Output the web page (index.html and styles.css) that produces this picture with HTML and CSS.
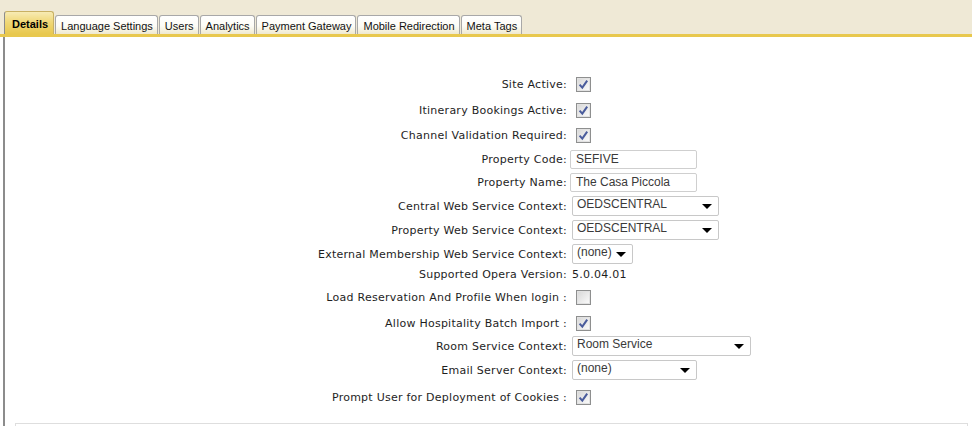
FILE: index.html
```html
<!DOCTYPE html>
<html>
<head>
<meta charset="utf-8">
<title>Details</title>
<link rel="stylesheet" href="styles.css">
</head>
<body>
<div class="tabbar">
  <div class="tab active">Details</div>
  <div class="tab">Language Settings</div>
  <div class="tab">Users</div>
  <div class="tab">Analytics</div>
  <div class="tab">Payment Gateway</div>
  <div class="tab">Mobile Redirection</div>
  <div class="tab">Meta Tags</div>
</div>
<div class="panel">
  <div class="form">
    <div class="lbl">Site Active:</div>
    <div class="ctl"><span class="cb checked"><svg width="15" height="15" viewBox="0 0 15 15"><rect x="0.5" y="0.5" width="14" height="14" fill="#fff" stroke="#8e8f8f"/><rect x="1.5" y="1.5" width="12" height="12" fill="url(#g)" stroke="#e2e2e2"/><path d="M3.6 7.6 L6.3 10.6 L11.2 3.6" fill="none" stroke="#4a5c9c" stroke-width="2"/></svg></span></div>

    <div class="lbl">Itinerary Bookings Active:</div>
    <div class="ctl"><span class="cb checked"><svg width="15" height="15" viewBox="0 0 15 15"><rect x="0.5" y="0.5" width="14" height="14" fill="#fff" stroke="#8e8f8f"/><rect x="1.5" y="1.5" width="12" height="12" fill="url(#g)" stroke="#e2e2e2"/><path d="M3.6 7.6 L6.3 10.6 L11.2 3.6" fill="none" stroke="#4a5c9c" stroke-width="2"/></svg></span></div>

    <div class="lbl">Channel Validation Required:</div>
    <div class="ctl"><span class="cb checked"><svg width="15" height="15" viewBox="0 0 15 15"><rect x="0.5" y="0.5" width="14" height="14" fill="#fff" stroke="#8e8f8f"/><rect x="1.5" y="1.5" width="12" height="12" fill="url(#g)" stroke="#e2e2e2"/><path d="M3.6 7.6 L6.3 10.6 L11.2 3.6" fill="none" stroke="#4a5c9c" stroke-width="2"/></svg></span></div>

    <div class="lbl">Property Code:</div>
    <div class="ctl"><span class="txt">SEFIVE</span></div>

    <div class="lbl">Property Name:</div>
    <div class="ctl"><span class="txt">The Casa Piccola</span></div>

    <div class="lbl">Central Web Service Context:</div>
    <div class="ctl"><span class="sel w146">OEDSCENTRAL<i class="arr"></i></span></div>

    <div class="lbl">Property Web Service Context:</div>
    <div class="ctl"><span class="sel w146">OEDSCENTRAL<i class="arr"></i></span></div>

    <div class="lbl">External Membership Web Service Context:</div>
    <div class="ctl"><span class="sel w60">(none)<i class="arr"></i></span></div>

    <div class="lbl">Supported Opera Version:</div>
    <div class="ctl"><span class="val">5.0.04.01</span></div>

    <div class="lbl">Load Reservation And Profile When login :</div>
    <div class="ctl"><span class="cb"><svg width="15" height="15" viewBox="0 0 15 15"><rect x="0.5" y="0.5" width="14" height="14" fill="#fff" stroke="#8e8f8f"/><rect x="1.5" y="1.5" width="12" height="12" fill="url(#g)" stroke="#e2e2e2"/></svg></span></div>

    <div class="lbl">Allow Hospitality Batch Import :</div>
    <div class="ctl"><span class="cb checked"><svg width="15" height="15" viewBox="0 0 15 15"><rect x="0.5" y="0.5" width="14" height="14" fill="#fff" stroke="#8e8f8f"/><rect x="1.5" y="1.5" width="12" height="12" fill="url(#g)" stroke="#e2e2e2"/><path d="M3.6 7.6 L6.3 10.6 L11.2 3.6" fill="none" stroke="#4a5c9c" stroke-width="2"/></svg></span></div>

    <div class="lbl">Room Service Context:</div>
    <div class="ctl"><span class="sel w178">Room Service<i class="arr"></i></span></div>

    <div class="lbl">Email Server Context:</div>
    <div class="ctl"><span class="sel w124">(none)<i class="arr"></i></span></div>

    <div class="lbl">Prompt User for Deployment of Cookies :</div>
    <div class="ctl"><span class="cb checked"><svg width="15" height="15" viewBox="0 0 15 15"><rect x="0.5" y="0.5" width="14" height="14" fill="#fff" stroke="#8e8f8f"/><rect x="1.5" y="1.5" width="12" height="12" fill="url(#g)" stroke="#e2e2e2"/><path d="M3.6 7.6 L6.3 10.6 L11.2 3.6" fill="none" stroke="#4a5c9c" stroke-width="2"/></svg></span></div>
  </div>
  <div class="footer-box"></div>
</div>
<svg width="0" height="0" class="defs">
  <defs>
    <linearGradient id="g" x1="0" y1="0" x2="1" y2="1">
      <stop offset="0" stop-color="#d8d8d8"/>
      <stop offset="1" stop-color="#fbfbfb"/>
    </linearGradient>
  </defs>
</svg>
</body>
</html>
```

FILE: styles.css
```css
html, body {
  margin: 0;
  padding: 0;
  background: #fff;
  height: 100%;
  overflow: hidden;
}

body {
  font-family: "DejaVu Sans", Verdana, sans-serif;
  font-size: 11px;
  color: #1e1e1e;
}

.tabbar {
  height: 34px;
  background: #efe9d6;
  border-bottom: 3px solid #e8c84e;
  display: flex;
  align-items: flex-end;
  padding-left: 4px;
  box-sizing: content-box;
}

.tab {
  height: 18px;
  line-height: 20px;
  padding: 0 4px 0 5px;
  margin-right: 1px;
  border: 1px solid #a8a8a8;
  border-bottom: none;
  border-radius: 3px 3px 0 0;
  background: linear-gradient(#ffffff 0%, #fdfcf6 55%, #efe9cf 100%);
  font-family: "Liberation Sans", Arial, sans-serif;
  font-size: 11px;
  color: #111;
  white-space: nowrap;
}

.tab.active {
  height: 22px;
  line-height: 25px;
  padding: 0 5px 0 7px;
  border-color: #c9b163;
  border-left-color: #8c8c8c;
  background: linear-gradient(#f7ebb4 0%, #f0d878 45%, #e8c84e 100%);
  font-weight: bold;
  color: #000;
}

.panel {
  margin-left: 3px;
  border-left: 2px solid #8c8c8c;
  height: calc(100% - 37px);
  box-sizing: border-box;
  padding-top: 34px;
}

.form {
  display: grid;
  grid-template-columns: 562px auto;
  grid-template-rows: 26px 26px 24px 24px 23px 24px 24px 24px 16px 30px 22px 24px 24px 30px;
  column-gap: 3px;
  align-items: center;
}

.lbl {
  text-align: right;
  white-space: nowrap;
  letter-spacing: 0.25px;
}

.ctl {
  display: flex;
  align-items: center;
}

.cb {
  display: block;
  width: 15px;
  height: 15px;
  margin-left: 6px;
}

.cb svg {
  display: block;
}

.txt {
  display: block;
  box-sizing: border-box;
  width: 127px;
  height: 19px;
  border: 1px solid #cfcfcf;
  border-radius: 2px;
  padding: 0 5px;
  font-family: "Liberation Sans", Arial, sans-serif;
  font-size: 12px;
  line-height: 16px;
  color: #3a3a3a;
}

.sel {
  position: relative;
  display: block;
  box-sizing: border-box;
  height: 20px;
  margin-left: 2px;
  border: 1px solid #c8c8c8;
  border-radius: 2px;
  padding: 0 4px;
  font-family: "Liberation Sans", Arial, sans-serif;
  font-size: 12px;
  line-height: 15px;
  color: #3a3a3a;
}

.w146 { width: 147px; }
.w60 { width: 61px; }
.w178 { width: 179px; }
.w124 { width: 125px; }

.arr {
  position: absolute;
  right: 6px;
  top: 7px;
  width: 0;
  height: 0;
  border-left: 5px solid transparent;
  border-right: 5px solid transparent;
  border-top: 5px solid #000;
}

.val {
  margin-left: 2px;
  letter-spacing: 0.25px;
}

.footer-box {
  margin: 11px 4px 0 10px;
  height: 20px;
  border: 1px solid #dedede;
}

.defs {
  position: absolute;
}
```
